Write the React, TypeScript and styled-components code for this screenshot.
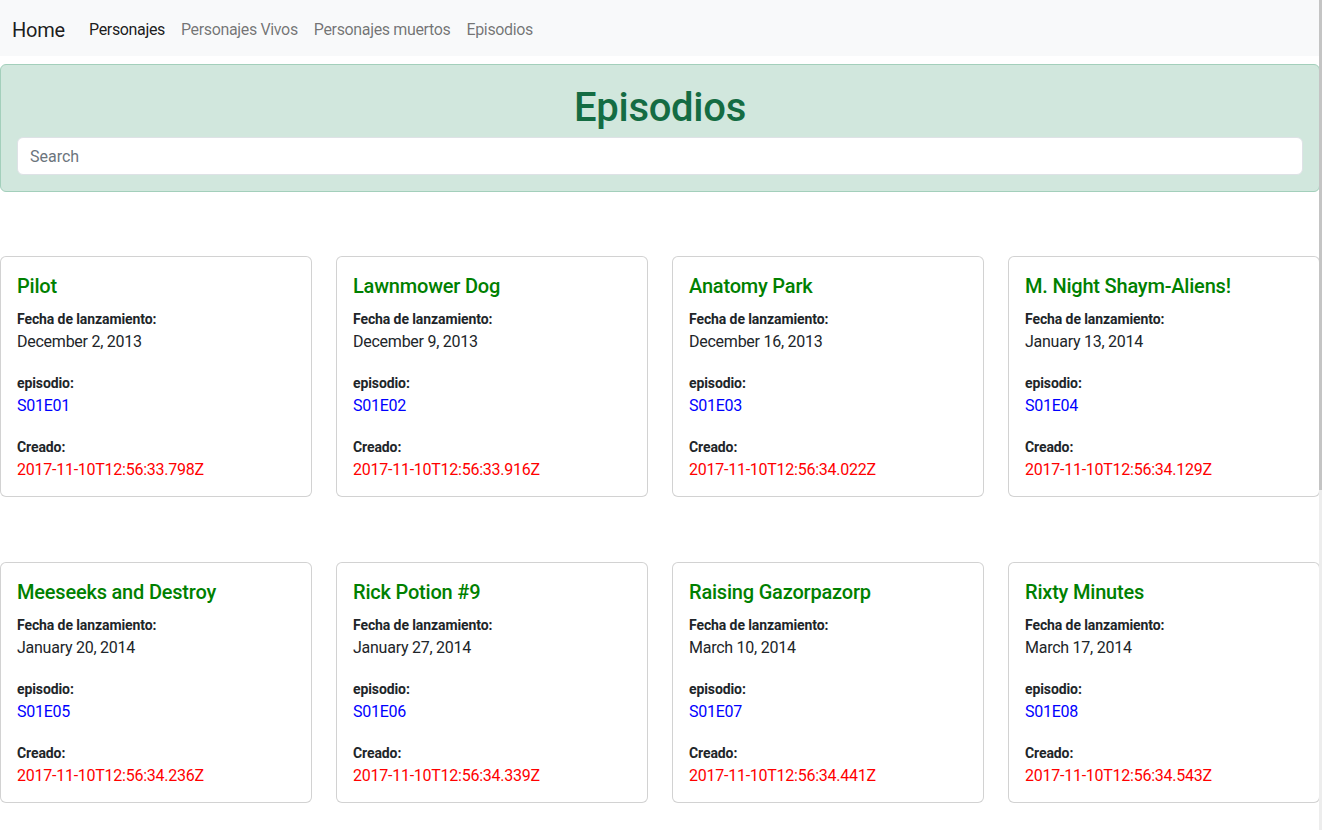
import React from "react";
import styled, { createGlobalStyle } from "styled-components";

const GlobalStyle = createGlobalStyle`
  html, body {
    margin: 0;
    padding: 0;
    overflow: hidden;
    background: #ffffff;
  }
  body {
    font-family: Roboto, "Liberation Sans", sans-serif;
    font-size: 16px;
    line-height: 1.5;
    color: #212529;
  }
  * { box-sizing: border-box; }
`;

const Page = styled.div`
  width: 1320px;
`;

const NavBar = styled.nav`
  display: flex;
  align-items: center;
  height: 56px;
  padding: 10px 12px 6px;
  background: #f8f9fa;
`;

const Brand = styled.a`
  font-size: 20px;
  line-height: 30px;
  padding: 5px 0;
  margin-right: 16px;
  color: rgba(0, 0, 0, 0.9);
  text-decoration: none;
  letter-spacing: -0.2px;
`;

const NavLinks = styled.div`
  display: flex;
  align-items: center;
`;

const NavLink = styled.a<{ $active?: boolean }>`
  padding: 8px;
  font-size: 16px;
  line-height: 24px;
  letter-spacing: -0.35px;
  text-decoration: none;
  color: ${(p) => (p.$active ? "rgba(0,0,0,0.9)" : "rgba(0,0,0,0.55)")};
`;

const Alert = styled.section`
  margin-top: 8px;
  padding: 16px;
  background: #d1e7dd;
  border: 1px solid #a3cfbb;
  border-radius: 6px;
  color: #146c43;
`;

const Title = styled.h1`
  margin: 0 0 4px;
  padding-top: 1px;
  text-align: center;
  font-size: 40px;
  line-height: 51px;
  font-weight: 500;
  letter-spacing: -0.3px;
`;

const SearchInput = styled.input`
  display: block;
  width: 100%;
  height: 38px;
  padding: 6px 12px;
  font-family: inherit;
  font-size: 16px;
  color: #212529;
  background: #ffffff;
  border: 1px solid #dee2e6;
  border-radius: 6px;
  outline: none;
  &::placeholder {
    color: #6c757d;
  }
`;

const Grid = styled.div`
  display: grid;
  grid-template-columns: repeat(4, 1fr);
  column-gap: 24px;
  row-gap: 65px;
  padding-top: 64px;
`;

const Card = styled.article`
  border: 1px solid rgba(0, 0, 0, 0.175);
  border-radius: 6px;
  padding: 17px 16px 14px;
  background: #fff;
`;

const CardTitle = styled.h5`
  margin: 0 0 10px;
  font-size: 20px;
  line-height: 24px;
  font-weight: 500;
  color: #008000;
  letter-spacing: -0.2px;
`;

const Label = styled.p`
  margin: 0;
  font-size: 14px;
  line-height: 22px;
  font-weight: 700;
  letter-spacing: -0.1px;
`;

const Value = styled.p<{ $color?: string; $last?: boolean }>`
  margin: 0 0 ${(p) => (p.$last ? "0" : "18px")};
  font-size: 16px;
  line-height: 24px;
  letter-spacing: -0.25px;
  color: ${(p) => p.$color || "#212529"};
`;

const ScrollTrack = styled.div`
  position: fixed;
  top: 0;
  right: 0;
  width: 3px;
  height: 100%;
  background: #ededed;
`;

const ScrollThumb = styled.div`
  width: 100%;
  height: 490px;
  background: #c4c4c4;
`;

const episodes = [
  { name: "Pilot", date: "December 2, 2013", ep: "S01E01", created: "2017-11-10T12:56:33.798Z" },
  { name: "Lawnmower Dog", date: "December 9, 2013", ep: "S01E02", created: "2017-11-10T12:56:33.916Z" },
  { name: "Anatomy Park", date: "December 16, 2013", ep: "S01E03", created: "2017-11-10T12:56:34.022Z" },
  { name: "M. Night Shaym-Aliens!", date: "January 13, 2014", ep: "S01E04", created: "2017-11-10T12:56:34.129Z" },
  { name: "Meeseeks and Destroy", date: "January 20, 2014", ep: "S01E05", created: "2017-11-10T12:56:34.236Z" },
  { name: "Rick Potion #9", date: "January 27, 2014", ep: "S01E06", created: "2017-11-10T12:56:34.339Z" },
  { name: "Raising Gazorpazorp", date: "March 10, 2014", ep: "S01E07", created: "2017-11-10T12:56:34.441Z" },
  { name: "Rixty Minutes", date: "March 17, 2014", ep: "S01E08", created: "2017-11-10T12:56:34.543Z" },
];

export default function App() {
  return (
    <Page>
      <GlobalStyle />
      <NavBar>
        <Brand href="#">Home</Brand>
        <NavLinks>
          <NavLink href="#" $active>Personajes</NavLink>
          <NavLink href="#">Personajes Vivos</NavLink>
          <NavLink href="#">Personajes muertos</NavLink>
          <NavLink href="#">Episodios</NavLink>
        </NavLinks>
      </NavBar>
      <Alert>
        <Title>Episodios</Title>
        <SearchInput placeholder="Search" />
      </Alert>
      <Grid>
        {episodes.map((e) => (
          <Card key={e.ep}>
            <CardTitle>{e.name}</CardTitle>
            <Label>Fecha de lanzamiento:</Label>
            <Value>{e.date}</Value>
            <Label>episodio:</Label>
            <Value $color="#0000ff">{e.ep}</Value>
            <Label>Creado:</Label>
            <Value $color="#ff0000" $last>{e.created}</Value>
          </Card>
        ))}
      </Grid>
      <ScrollTrack>
        <ScrollThumb />
      </ScrollTrack>
    </Page>
  );
}
